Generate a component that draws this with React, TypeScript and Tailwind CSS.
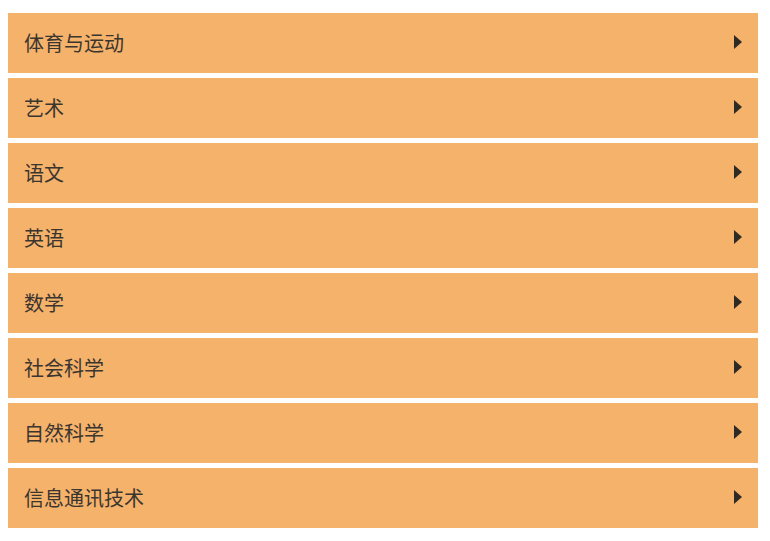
const subjects = [
  "体育与运动",
  "艺术",
  "语文",
  "英语",
  "数学",
  "社会科学",
  "自然科学",
  "信息通讯技术",
];

function Caret() {
  return (
    <svg width="8" height="14" viewBox="0 0 8 14" className="mb-[3px] shrink-0">
      <path d="M0 0 L8 7 L0 14 Z" fill="#2e2a26" />
    </svg>
  );
}

export default function App() {
  return (
    <div
      className="min-h-[541px] w-[770px] bg-white pt-[13px] pl-[8px] pr-[12px]"
      style={{ fontFamily: '"Noto Sans CJK SC", "Noto Sans", sans-serif' }}
    >
      <div className="flex flex-col gap-[5px]">
        {subjects.map((s) => (
          <div
            key={s}
            className="flex h-[60px] cursor-pointer items-center justify-between bg-[#f5b26b] pl-4 pr-4"
          >
            <span className="text-[20px] leading-none text-[#3b3530]">{s}</span>
            <Caret />
          </div>
        ))}
      </div>
    </div>
  );
}
